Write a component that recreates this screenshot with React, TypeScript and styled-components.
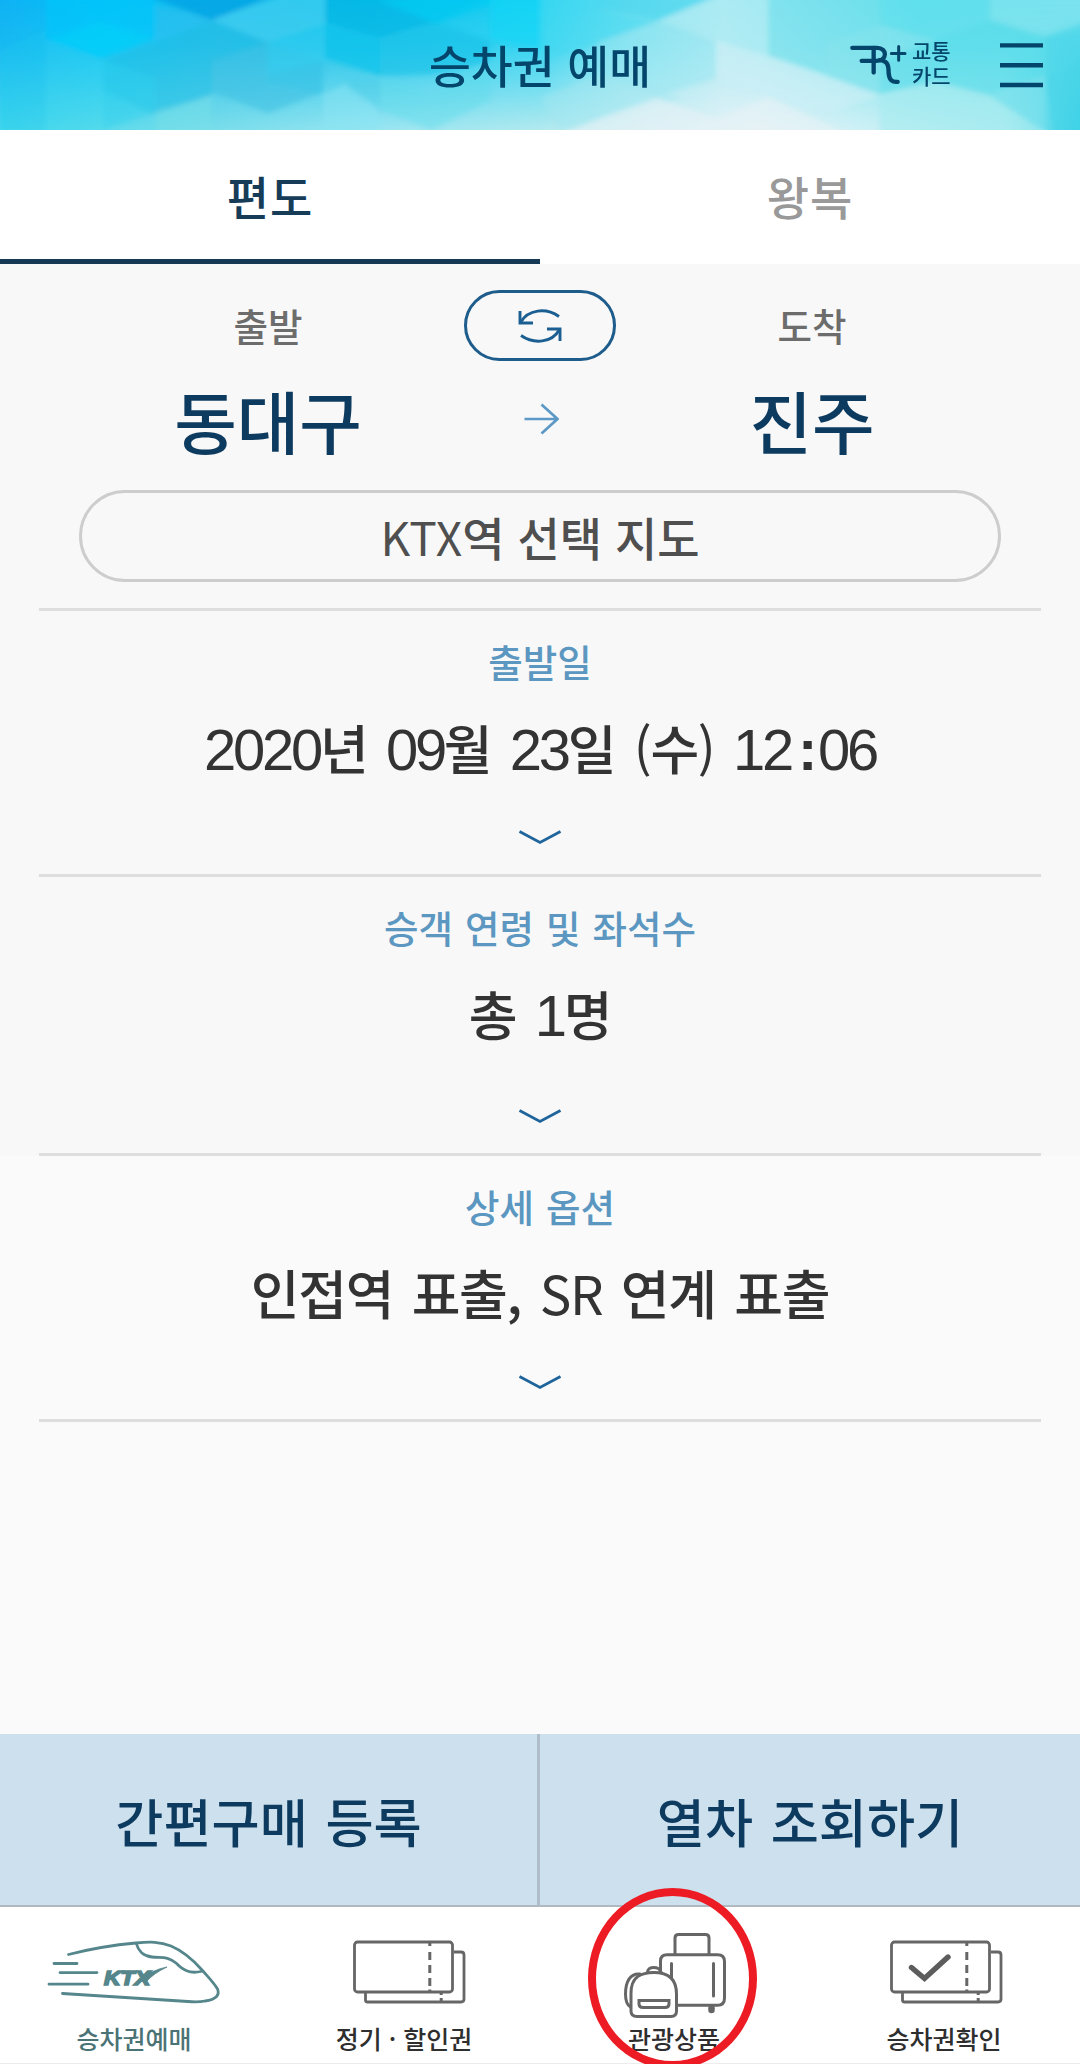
import React from "react";
import styled, { createGlobalStyle } from "styled-components";

const GlobalStyle = createGlobalStyle`
  * { box-sizing: border-box; }
  body {
    margin: 0;
    background: #fafafa;
    font-family: "Noto Sans CJK KR", "Noto Sans", sans-serif;
  }
  button {
    font: inherit;
    color: inherit;
    background: none;
    border: 0;
    padding: 0;
    margin: 0;
  }
`;

const navy = "#0d3a5f";

const Screen = styled.div`
  display: flex;
  flex-direction: column;
  width: 1080px;
  height: 2064px;
  overflow: hidden;
  background: #fafafa;
`;

const Header = styled.header`
  position: relative;
  display: grid;
  grid-template-columns: 1fr auto 1fr;
  align-items: center;
  height: 130px;
  flex: none;
  color: #04456b;
  overflow: hidden;
`;

const HeaderArt = styled.svg`
  position: absolute;
  inset: 0;
  display: block;
`;

const Title = styled.h1`
  position: relative;
  grid-column: 2;
  margin: 0 0 2px;
  font-size: 45.5px;
  line-height: 70px;
  font-weight: 500;
`;

const HeaderTools = styled.div`
  position: relative;
  display: flex;
  align-items: center;
  justify-content: flex-end;
  padding-right: 37px;
`;

const CardLabel = styled.span`
  width: 40px;
  margin: 0 48px 5px 3px;
  font-size: 21px;
  line-height: 25px;
  font-weight: 500;
  white-space: pre;
`;

const Tabs = styled.div`
  display: grid;
  grid-template-columns: 1fr 1fr;
  height: 134px;
  flex: none;
  background: #fff;
`;

const Tab = styled.button<{ $active?: boolean }>`
  border-bottom: 5px solid ${(p) => (p.$active ? "#163a56" : "#fff")};
  color: ${(p) => (p.$active ? "#163c58" : "#999")};
  font-size: 46px;
  line-height: 70px;
  letter-spacing: 1px;
  font-weight: 500;
`;

const Route = styled.section`
  flex: none;
  height: 344px;
  padding-top: 26px;
  background: #f8f8f8;
`;

const RouteGrid = styled.div`
  display: grid;
  grid-template-columns: 392px 152px 392px;
  grid-template-rows: 71px 116px;
  justify-content: center;
  justify-items: center;
  align-items: center;
`;

const RouteLabel = styled.span`
  padding-bottom: 2px;
  font-size: 37.5px;
  line-height: 50px;
  font-weight: 500;
  color: #6c6c6c;
`;

const Station = styled.span`
  padding-top: 2px;
  font-size: 68px;
  line-height: 90px;
  font-weight: 500;
  color: ${navy};
`;

const SwapButton = styled.button`
  display: flex;
  align-items: center;
  justify-content: center;
  width: 152px;
  height: 71px;
  border: 3px solid #1d5c8b;
  border-radius: 36px;
`;

const MapButton = styled.button`
  display: block;
  width: 922px;
  height: 92px;
  margin: 13px auto 0;
  border: 3px solid #cdcdcd;
  border-radius: 46px;
  color: #4f4f4f;
  font-size: 46px;
  line-height: 80px;
  font-weight: 500;
`;

const Light = styled.span`
  font-weight: 400;
`;

const Fields = styled.div<{ $tone: string }>`
  flex: none;
  padding: 0 39px;
  background: ${(p) => p.$tone};
`;

const Field = styled.div<{ $height: number; $first?: boolean }>`
  display: flex;
  flex-direction: column;
  align-items: center;
  height: ${(p) => p.$height}px;
  padding: 25px 0 29px;
  border-bottom: 3px solid #dedede;
  ${(p) => p.$first && "border-top: 3px solid #dedede;"}
`;

const FieldLabel = styled.div`
  font-size: 37.5px;
  line-height: 50px;
  word-spacing: 1.5px;
  font-weight: 500;
  color: #5b97c0;
`;

const FieldValue = styled.div`
  margin: 26px 0 auto;
  font-size: 53px;
  line-height: 70px;
  letter-spacing: -1.3px;
  word-spacing: 5px;
  font-weight: 500;
  color: #333;
  white-space: nowrap;
`;

const Digits = styled.span`
  font-family: "Liberation Sans", Arial, sans-serif;
  font-weight: 400;
  font-size: 58px;
  line-height: 1;
  letter-spacing: -3.3px;
`;

const Colon = styled.span`
  padding: 0 4px 0 7px;
  font-weight: 700;
`;

const Spacer = styled.div`
  flex: 1;
`;

const Actions = styled.div`
  display: grid;
  grid-template-columns: 540px 540px;
  flex: none;
  height: 173px;
  border-bottom: 2px solid #b0b9c0;
`;

const Action = styled.button<{ $divided?: boolean }>`
  background: #cde0ed;
  color: ${navy};
  border-right: ${(p) => (p.$divided ? "3px solid #afbdc9" : "0")};
  font-size: 52.3px;
  line-height: 76px;
  word-spacing: 3px;
  font-weight: 500;
`;

const Nav = styled.nav`
  display: grid;
  grid-template-columns: repeat(4, 1fr);
  flex: none;
  height: 157px;
  background: #fff;
  border-bottom: 1px solid #ececec;
`;

const NavItem = styled.a<{ $active?: boolean }>`
  position: relative;
  display: flex;
  flex-direction: column;
  align-items: center;
  padding-top: 23px;
  font-size: 25px;
  line-height: 36px;
  color: ${(p) => (p.$active ? "#4b7376" : "#2e2e2e")};
`;

const NavLabel = styled.span`
  padding-right: 2px;
  font-weight: 500;
`;

const Highlight = styled.div`
  position: absolute;
  left: 48px;
  top: -19px;
  width: 169px;
  height: 181px;
  border: 8px solid #ed1c24;
  border-radius: 50%;
`;

const HeaderPattern = () => (
  <HeaderArt width="1080" height="130" viewBox="0 0 1080 130" preserveAspectRatio="none">
    <defs>
      <linearGradient id="sky">
        <stop offset="0" stopColor="#0fb2f3" />
        <stop offset=".1" stopColor="#06c2f8" />
        <stop offset=".2" stopColor="#1cbcec" />
        <stop offset=".33" stopColor="#0dc0ea" />
        <stop offset=".5" stopColor="#1ad0f4" />
        <stop offset=".58" stopColor="#74e0f0" />
        <stop offset=".67" stopColor="#abe9f2" />
        <stop offset=".74" stopColor="#8de5ef" />
        <stop offset=".85" stopColor="#5edfec" />
        <stop offset="1" stopColor="#6adfed" />
      </linearGradient>
      <linearGradient id="haze">
        <stop offset="0" stopColor="#44d8ec" />
        <stop offset=".2" stopColor="#7addea" />
        <stop offset=".35" stopColor="#9ae5f1" />
        <stop offset=".5" stopColor="#b2e9ee" />
        <stop offset=".6" stopColor="#d3eff4" />
        <stop offset=".7" stopColor="#e6f3f8" />
        <stop offset=".8" stopColor="#cdf0f5" />
        <stop offset=".93" stopColor="#acebf0" />
        <stop offset="1" stopColor="#3ccfe8" />
      </linearGradient>
      <linearGradient id="fade" x2="0" y2="1">
        <stop offset="0" stopColor="#fff" stopOpacity="0" />
        <stop offset=".35" stopColor="#fff" stopOpacity=".2" />
        <stop offset="1" stopColor="#fff" />
      </linearGradient>
      <mask id="fall"><rect width="1080" height="130" fill="url(#fade)" /></mask>
      <filter id="soft"><feGaussianBlur stdDeviation="2.6" /></filter>
    </defs>
    <rect width="1080" height="130" fill="url(#sky)" />
    <rect width="1080" height="130" fill="url(#haze)" mask="url(#fall)" />
    <g filter="url(#soft)" opacity=".82">
      <path d="M46 -5H155V38L100 58L46 38Z" fill="#00c6fb" opacity=".8" />
      <path d="M46 40L100 22L155 38L100 58Z" fill="#00d2fa" opacity=".7" />
      <path d="M145 -5H275L212 20Z" fill="#00a2e4" opacity=".95" />
      <path d="M155 5L212 20L155 42Z" fill="#2cc0f0" opacity=".6" />
      <path d="M212 20L285 -5H325V25L268 42Z" fill="#46d0f2" opacity=".75" />
      <path d="M0 50L46 30V135H0Z" fill="#18c8ee" opacity=".35" />
      <path d="M46 40L103 60V135H46Z" fill="#35d6ee" opacity=".3" />
      <path d="M103 60L212 22L268 42L212 64V95L155 115L103 90Z" fill="#22bde3" opacity=".6" />
      <path d="M103 60L155 78V112L103 130Z" fill="#2cd0ee" opacity=".5" />
      <path d="M212 60L268 42L323 62V92L268 113L212 92Z" fill="#3cbfe2" opacity=".65" />
      <path d="M268 42L325 22L380 38V75L330 60L268 75Z" fill="#2fd0f2" opacity=".55" />
      <path d="M268 75L323 60V94L268 82Z" fill="#30c2e8" opacity=".4" />
      <path d="M325 -5H490L432 24L380 38L325 22Z" fill="#02b4e3" opacity=".75" />
      <path d="M325 22L380 38V76L325 58Z" fill="#0cc0ea" opacity=".8" />
      <path d="M380 38L432 22L490 40V62L432 74L380 76Z" fill="#16c2e9" opacity=".8" />
      <path d="M378 0L440 -5H490V5L435 24Z" fill="#08cbf2" opacity=".8" />
      <path d="M345 82L380 76V112L345 92Z" fill="#4ccde8" opacity=".5" />
      <path d="M380 76L432 94L490 62V100L432 130L380 110Z" fill="#5edcec" opacity=".5" />
      <path d="M155 112L212 96V135H155Z" fill="#78dfe6" opacity=".6" />
      <path d="M323 95L345 84L378 108V135H323Z" fill="#8ce4f4" opacity=".6" />
      <path d="M490 -5H545V50L490 40Z" fill="#12d6f6" opacity=".7" />
      <path d="M540 -5H600V10L657 22L600 42L540 62Z" fill="#45d9f0" opacity=".75" />
      <path d="M600 -5H720L657 21L598 8Z" fill="#48d6ee" opacity=".85" />
      <path d="M657 21L720 -5H768V60L716 40Z" fill="#acebf4" opacity=".7" />
      <path d="M598 42L657 21L716 42V78L657 96L598 75Z" fill="#92e6f0" opacity=".55" />
      <path d="M540 98L598 75L680 98L600 122L560 130Z" fill="#a2e6f0" opacity=".6" />
      <path d="M600 118L657 98L716 118L768 97L850 135H560Z" fill="#e5f2f6" opacity=".75" />
      <path d="M768 -5H880V94L826 75L768 56Z" fill="#70dfeb" opacity=".7" />
      <path d="M716 40L768 56L826 76L880 96L826 114L716 78Z" fill="#cdeff7" opacity=".7" />
      <path d="M826 42L880 26L935 40V76L880 94L826 76Z" fill="#86e3ed" opacity=".6" />
      <path d="M880 -5H990V20L935 40L880 24Z" fill="#60dfec" opacity=".8" />
      <path d="M880 60L935 40L990 20L1045 36V75L990 96L935 82L880 94Z" fill="#50dae8" opacity=".6" />
      <path d="M990 -5H1085V30L1045 36L990 20Z" fill="#84e4ed" opacity=".75" />
      <path d="M880 96L935 82L990 96L1045 78V135H880Z" fill="#a6ebf0" opacity=".7" />
      <path d="M990 96L1045 78L1085 60V135H1050Z" fill="#53d9ea" opacity=".5" />
      <path d="M1045 36L1085 22V135H1054L1045 76Z" fill="#35d2e8" opacity=".5" />
    </g>
  </HeaderArt>
);

const RailPlusLogo = () => (
  <svg width="60" height="47" viewBox="84 63 180 140" fill="none" stroke="currentColor" strokeWidth="13" strokeLinecap="round" strokeLinejoin="round">
    <path d="M94 80H168C200 80 200 118 166 119H122" />
    <path d="M158 80V154" />
    <path d="M176 117C205 120 202 138 203 157C205 177 214 184 230 182" />
    <path d="M211 97H252M233 76V117" strokeWidth="9" />
  </svg>
);

const MenuIcon = () => (
  <svg width="43" height="46" viewBox="0 0 43 46" stroke="currentColor" strokeWidth="4.4">
    <path d="M0 3.4H43M0 23.2H43M0 43H43" />
  </svg>
);

const SwapIcon = () => (
  <svg width="46" height="36" viewBox="0 0 46 36" fill="none" stroke="#1b5f92" strokeWidth="2.9">
    <path d="M3 3V15H16" />
    <path d="M3.5 14.5C11 1 29 -.5 42 8.500" />
    <path d="M43 33V21H30" />
    <path d="M42.500 21.500C35 35 17 36.500 4 27.500" />
  </svg>
);

const ArrowIcon = () => (
  <svg width="38" height="32" viewBox="0 0 38 32" fill="none" stroke="#5c99c6" strokeWidth="2.7">
    <path d="M3.500 16H36M20.500 1.500L36.500 16L20.500 30.500" />
  </svg>
);

const Chevron = () => (
  <svg width="44" height="15" viewBox="0 0 44 15" fill="none" stroke="#1f659c" strokeWidth="2.800">
    <path d="M1.500 1.500L22 12.500L42.500 1.500" />
  </svg>
);

const TrainIcon = () => (
  <svg width="200" height="90" viewBox="-5 0 200 90" fill="none" stroke="#55868b" strokeWidth="2.800" strokeLinecap="round">
    <path d="M28.500 24.500C50 19 73 15 96 13C110 11.600 120 11.500 131 16C144 21.500 155 32 162 40C169 48 174 53 177.500 59C180 65 176 69.500 165 71C160 72 154 72 148 71.500L22.500 63.500" />
    <path d="M96.500 14C98 20 103 26 112 27C122 28 128 26 136 33C143 40 149 44 161 41.500" />
    <path d="M14 33.500H37M20 42.600H57M9 54.200H48" />
    <text x="64" y="55" fill="#55868b" strokeWidth="1.700" strokeLinejoin="miter" fontFamily="Liberation Sans, sans-serif" fontWeight="700" fontStyle="italic" fontSize="20.500" textLength="46" lengthAdjust="spacingAndGlyphs">KTX</text>
    <path d="M103 49Q111 40 127 37Q114 43 106 52Z" fill="#55868b" strokeWidth=".8" />
  </svg>
);

const TicketIcon = ({ checked }: { checked?: boolean }) => (
  <svg width="200" height="90" viewBox={checked ? "3 0 200 90" : "0 0 200 90"} fill="none" stroke="#666" strokeWidth="2.800">
    <path d="M60.500 62V70Q60.500 72 62.500 72H156Q159 72 159 69V25Q159 22 156 22H149" />
    <rect x="49.500" y="12" width="98" height="50" rx="3" />
    <path d="M124.800 13V16M124.800 22V30M124.800 35V43M124.800 48V56M124.800 59.500V62M136.200 63V65M136.200 68V71" strokeWidth="3" />
    {checked && <path d="M69.500 37.500L82.500 48.500L106 27" stroke="#5c5c5c" strokeWidth="5.400" strokeLinecap="round" />}
  </svg>
);

const LuggageIcon = () => (
  <svg width="200" height="90" viewBox="-35 10 200 90" fill="none" stroke="#666" strokeWidth="3" strokeLinecap="round">
    <path d="M65 34V18Q65 14.500 68.500 14.500H95.500Q99 14.500 99 18V34" />
    <path d="M50.500 50V41Q50.500 34.700 57 34.700H107.500Q114.500 34.700 114.500 41.500V78Q114.500 85.300 107.500 85.300H68" />
    <path d="M61.500 43.500V58M103.500 43.500V76" />
    <path d="M101.500 88V90" strokeWidth="6.500" />
    <path d="M21 92V73C21 56 32 52.500 44 52.500C57 52.500 66.500 58 66.500 74V91Q66.500 96.500 61 96.500H27Q21 96.500 21 91Z" fill="#fff" />
    <path d="M37.500 52C38 46 49 46 51 52" />
    <path d="M30 54C20 53 15.500 62 15.500 74C15.500 81 17 85 20.500 87" />
    <path d="M29 80.500H59V84Q59 87.500 55 87.500H33Q29 87.500 29 84Z" />
  </svg>
);

export default function App() {
  return (
    <Screen lang="ko">
      <GlobalStyle />
      <Header>
        <HeaderPattern />
        <Title>승차권 예매</Title>
        <HeaderTools>
          <RailPlusLogo />
          <CardLabel>{"교통\n카드"}</CardLabel>
          <MenuIcon />
        </HeaderTools>
      </Header>
      <Tabs>
        <Tab $active>편도</Tab>
        <Tab>왕복</Tab>
      </Tabs>
      <Route>
        <RouteGrid>
          <RouteLabel>출발</RouteLabel>
          <SwapButton aria-label="swap"><SwapIcon /></SwapButton>
          <RouteLabel>도착</RouteLabel>
          <Station>동대구</Station>
          <ArrowIcon />
          <Station>진주</Station>
        </RouteGrid>
        <MapButton><Light>KTX</Light>역 선택 지도</MapButton>
      </Route>
      <Fields $tone="#f8f8f8">
        <Field $height={269} $first>
          <FieldLabel>출발일</FieldLabel>
          <FieldValue>
            <Digits>2020</Digits>년 <Digits>09</Digits>월 <Digits>23</Digits>일 <Light>(</Light>수<Light>)</Light>{" "}
            <Digits>12<Colon>:</Colon>06</Digits>
          </FieldValue>
          <Chevron />
        </Field>
        <Field $height={279}>
          <FieldLabel>승객 연령 및 좌석수</FieldLabel>
          <FieldValue>총 <Digits>1</Digits>명</FieldValue>
          <Chevron />
        </Field>
      </Fields>
      <Fields $tone="#fafafa">
        <Field $height={266}>
          <FieldLabel>상세 옵션</FieldLabel>
          <FieldValue>인접역 표출, <Light>SR</Light> 연계 표출</FieldValue>
          <Chevron />
        </Field>
      </Fields>
      <Spacer />
      <Actions>
        <Action $divided>간편구매 등록</Action>
        <Action>열차 조회하기</Action>
      </Actions>
      <Nav>
        <NavItem $active><TrainIcon /><NavLabel>승차권예매</NavLabel></NavItem>
        <NavItem><TicketIcon /><NavLabel>정기 · 할인권</NavLabel></NavItem>
        <NavItem><LuggageIcon /><NavLabel>관광상품</NavLabel><Highlight /></NavItem>
        <NavItem><TicketIcon checked /><NavLabel>승차권확인</NavLabel></NavItem>
      </Nav>
    </Screen>
  );
}
